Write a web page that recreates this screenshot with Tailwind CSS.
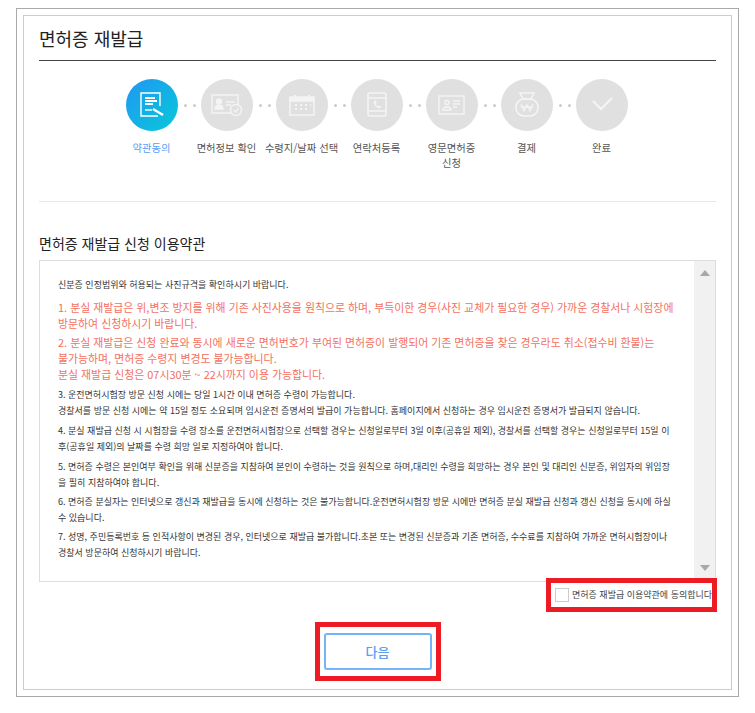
<!DOCTYPE html>
<html lang="ko">
<head>
    <meta charset="UTF-8">
    <meta name="viewport" content="width=device-width, initial-scale=1.0">
    <title>면허증 재발급</title>
    <script src="https://cdn.jsdelivr.net/npm/@tailwindcss/browser@4"></script>
</head>
<body class="bg-white font-['Noto_Sans_CJK_KR','Noto_Sans',sans-serif] text-[#333]">
    <div class="ml-[16px] mt-[8px] w-[723px] h-[689px] border border-[#aaa] p-[6px] shadow-[0_6px_0_#f2f2f2]">
        <div class="h-[675px] border border-[#ccc] px-[15px]">

            <!-- title -->
            <div class="h-[45px] border-b border-[#444] pt-[9px]">
                <h1 class="text-[18px] leading-[26px] font-normal text-[#222]">면허증 재발급</h1>
            </div>

            <!-- steps -->
            <div class="h-[141px] border-b border-[#e8e8e8] pl-[87px] pt-[18px]">
                <div class="flex items-center">
                    <div class="w-[52px] h-[52px] rounded-full bg-gradient-to-br from-[#2196f3] to-[#0bc8d6]">
                        <svg width="52" height="52" viewBox="0 0 52 52" fill="none" stroke="#fff" stroke-width="1.4">
                            <path d="M34 27V14H15v23h17"/>
                            <path d="M19 19h10M19 22h12M19 25h8" stroke-width="2"/>
                            <path d="M19 31h7" />
                            <path d="M27 30l10 6" stroke-width="2.4"/>
                        </svg>
                    </div>
                    <div class="w-[23px] flex justify-center gap-[6px]"><span class="w-[3px] h-[3px] rounded-full bg-[#ccc]"></span><span class="w-[3px] h-[3px] rounded-full bg-[#ccc]"></span></div>
                    <div class="w-[52px] h-[52px] rounded-full bg-[#e0e0e0]">
                        <svg width="52" height="52" viewBox="0 0 52 52" fill="none" stroke="#f4f4f4" stroke-width="1.4">
                            <path d="M30 34H11V16h26v10"/>
                            <circle cx="35" cy="31" r="5.5"/>
                            <path d="M32.5 31l2 2 3-3.5"/>
                            <circle cx="18" cy="22.5" r="2.5" fill="#f4f4f4"/>
                            <path d="M14 30c0-5 8-5 8 0z" fill="#f4f4f4"/>
                            <path d="M25 23h9M25 26h5"/>
                        </svg>
                    </div>
                    <div class="w-[23px] flex justify-center gap-[6px]"><span class="w-[3px] h-[3px] rounded-full bg-[#ccc]"></span><span class="w-[3px] h-[3px] rounded-full bg-[#ccc]"></span></div>
                    <div class="w-[52px] h-[52px] rounded-full bg-[#e0e0e0]">
                        <svg width="52" height="52" viewBox="0 0 52 52" fill="none" stroke="#f4f4f4" stroke-width="1.6">
                            <path d="M14 18h24v18H14z"/>
                            <path d="M14 19h24v3H14z" fill="#f4f4f4"/>
                            <path d="M19 16v4M33 16v4" stroke-width="2"/>
                            <path d="M19 26h2M24 26h2M29 26h2M34 26h1M19 30h2M24 30h2M29 30h2" stroke-width="2"/>
                        </svg>
                    </div>
                    <div class="w-[23px] flex justify-center gap-[6px]"><span class="w-[3px] h-[3px] rounded-full bg-[#ccc]"></span><span class="w-[3px] h-[3px] rounded-full bg-[#ccc]"></span></div>
                    <div class="w-[52px] h-[52px] rounded-full bg-[#e0e0e0]">
                        <svg width="52" height="52" viewBox="0 0 52 52" fill="none" stroke="#f4f4f4" stroke-width="1.6">
                            <rect x="17" y="14" width="18" height="23" rx="2"/>
                            <path d="M17 19h18M17 32h18"/>
                            <path d="M23 22c-1 3 2 7 6 7.500l1-2-2.500-1-1 .8c-1-.8-1.500-1.500-1.800-2.800l1-.8-.8-2.500z" fill="#f4f4f4" stroke="none"/>
                        </svg>
                    </div>
                    <div class="w-[23px] flex justify-center gap-[6px]"><span class="w-[3px] h-[3px] rounded-full bg-[#ccc]"></span><span class="w-[3px] h-[3px] rounded-full bg-[#ccc]"></span></div>
                    <div class="w-[52px] h-[52px] rounded-full bg-[#e0e0e0]">
                        <svg width="52" height="52" viewBox="0 0 52 52" fill="none" stroke="#f4f4f4" stroke-width="1.4">
                            <rect x="13" y="17" width="25" height="18"/>
                            <circle cx="21" cy="23.500" r="2"/>
                            <path d="M17 31c0-4 8-4 8 0z"/>
                            <path d="M27 22h7M27 25h7M27 28h4"/>
                        </svg>
                    </div>
                    <div class="w-[23px] flex justify-center gap-[6px]"><span class="w-[3px] h-[3px] rounded-full bg-[#ccc]"></span><span class="w-[3px] h-[3px] rounded-full bg-[#ccc]"></span></div>
                    <div class="w-[52px] h-[52px] rounded-full bg-[#e0e0e0]">
                        <svg width="52" height="52" viewBox="0 0 52 52" fill="none" stroke="#f4f4f4" stroke-width="1.6">
                            <path d="M19 14h14l-3 6h-8z"/>
                            <rect x="15" y="20" width="22" height="17" rx="8"/>
                            <path d="M20 25l3 7 3-6 3 6 3-7M20 28h12" stroke-width="1.3"/>
                        </svg>
                    </div>
                    <div class="w-[23px] flex justify-center gap-[6px]"><span class="w-[3px] h-[3px] rounded-full bg-[#ccc]"></span><span class="w-[3px] h-[3px] rounded-full bg-[#ccc]"></span></div>
                    <div class="w-[52px] h-[52px] rounded-full bg-[#e0e0e0]">
                        <svg width="52" height="52" viewBox="0 0 52 52" fill="none" stroke="#f4f4f4" stroke-width="2.200">
                            <path d="M17 22l8 8 11-11"/>
                        </svg>
                    </div>
                </div>
                <div class="flex -ml-[12px] mt-[9px] text-[10.300px] leading-[15px] text-center text-[#555]">
                    <div class="w-[75px] whitespace-nowrap text-[#5b9df5]">약관동의</div>
                    <div class="w-[75px] whitespace-nowrap">면허정보 확인</div>
                    <div class="w-[75px] whitespace-nowrap">수령지/날짜 선택</div>
                    <div class="w-[75px] whitespace-nowrap">연락처등록</div>
                    <div class="w-[75px] whitespace-nowrap">영문면허증<br>신청</div>
                    <div class="w-[75px] whitespace-nowrap">결제</div>
                    <div class="w-[75px] whitespace-nowrap">완료</div>
                </div>
            </div>

            <!-- terms -->
            <h2 class="mt-[31px] text-[14px] leading-[20px] font-normal text-[#222]">면허증 재발급 신청 이용약관</h2>
            <div class="mt-[7px] h-[322px] border border-[#ddd] flex">
                <div class="flex-1 pl-[18px] pt-[16px] text-[9px] leading-[16px] text-[#333] whitespace-nowrap">
                    <p class="mb-[6px]">신분증 인정범위와 허용되는 사진규격을 확인하시기 바랍니다.</p>
                    <p class="text-[10.900px] leading-[16px] text-[#f4705f] mb-[3px]">1. 분실 재발급은 위,변조 방지를 위해 기존 사진사용을 원칙으로 하며, 부득이한 경우(사진 교체가 필요한 경우) 가까운 경찰서나 시험장에<br>방문하여 신청하시기 바랍니다.</p>
                    <p class="text-[10.900px] leading-[16px] text-[#f4705f] mb-[5px]">2. 분실 재발급은 신청 완료와 동시에 새로운 면허번호가 부여된 면허증이 발행되어 기존 면허증을 찾은 경우라도 취소(접수비 환불)는<br>불가능하며, 면허증 수령지 변경도 불가능합니다.<br>분실 재발급 신청은 07시30분 ~ 22시까지 이용 가능합니다.</p>
                    <p class="mb-[4px]">3. 운전면허시험장 방문 신청 시에는 당일 1시간 이내 면허증 수령이 가능합니다.<br>경찰서를 방문 신청 시에는 약 15일 정도 소요되며 임시운전 증명서의 발급이 가능합니다. 홈페이지에서 신청하는 경우 임시운전 증명서가 발급되지 않습니다.</p>
                    <p class="mb-[4px]">4. 분실 재발급 신청 시 시험장을 수령 장소를 운전면허시험장으로 선택할 경우는 신청일로부터 3일 이후(공휴일 제외), 경찰서를 선택할 경우는 신청일로부터 15일 이<br>후(공휴일 제외)의 날짜를 수령 희망 일로 지정하여야 합니다.</p>
                    <p class="mb-[3px]">5. 면허증 수령은 본인여부 확인을 위해 신분증을 지참하여 본인이 수령하는 것을 원칙으로 하며,대리인 수령을 희망하는 경우 본인 및 대리인 신분증, 위임자의 위임장<br>을 필히 지참하여야 합니다.</p>
                    <p class="mb-[3px]">6. 면허증 분실자는 인터넷으로 갱신과 재발급을 동시에 신청하는 것은 불가능합니다.운전면허시험장 방문 시에만 면허증 분실 재발급 신청과 갱신 신청을 동시에 하실<br>수 있습니다.</p>
                    <p>7. 성명, 주민등록번호 등 인적사항이 변경된 경우, 인터넷으로 재발급 불가합니다.초본 또는 변경된 신분증과 기존 면허증, 수수료를 지참하여 가까운 면허시험장이나<br>경찰서 방문하여 신청하시기 바랍니다.</p>
                </div>
                <div class="w-[21px] bg-[#f1f1f1] flex flex-col justify-between items-center pt-[9px] pb-[10px]">
                    <div class="w-0 h-0 border-x-[5px] border-x-transparent border-b-[6px] border-b-[#a8a8a8]"></div>
                    <div class="w-0 h-0 border-x-[5px] border-x-transparent border-t-[6px] border-t-[#a8a8a8]"></div>
                </div>
            </div>

            <!-- agree -->
            <div class="flex justify-end -mt-[4px] -mr-[1px]">
                <label class="relative w-[171px] h-[34px] border-[5px] border-[#ed1c24] bg-white flex items-center pl-[4px] gap-[3px] text-[9px] text-[#444] whitespace-nowrap overflow-hidden">
                    <span class="w-[14px] h-[14px] border border-[#ccc] bg-white shrink-0"></span>
                    <span>면허증 재발급 이용약관에 동의합니다</span>
                </label>
            </div>

            <!-- next -->
            <div class="flex justify-center mt-[10px]">
                <div class="w-[126px] h-[59px] border-[5px] border-[#ed1c24] flex items-center justify-center">
                    <button class="w-[108px] h-[37px] border-2 border-[#74b4f7] rounded-[3px] text-[13px] font-medium text-[#5b9df5]">다음</button>
                </div>
            </div>
        </div>
    </div>
</body>
</html>
